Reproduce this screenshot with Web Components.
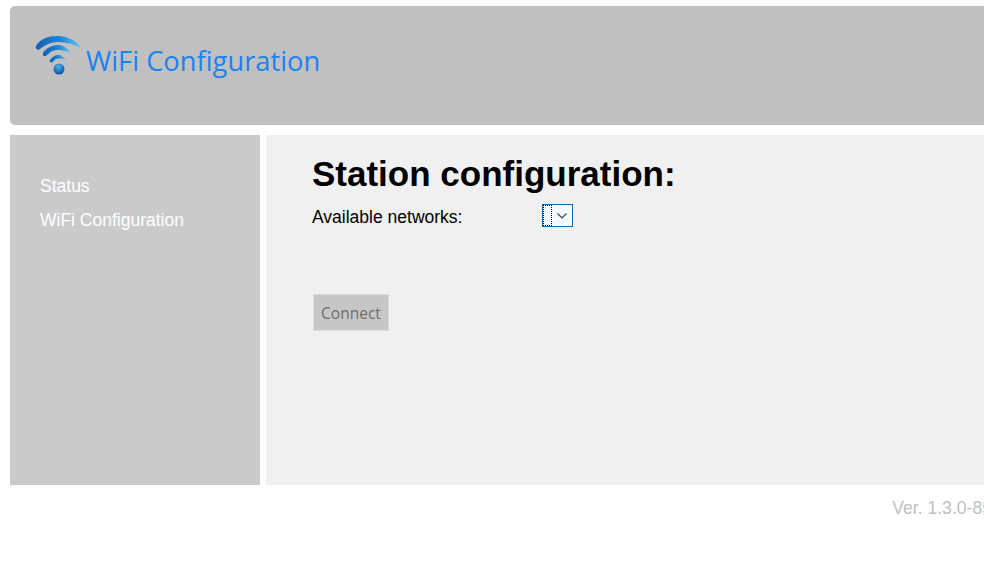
<!DOCTYPE html>
<html lang="en">
<head>
<meta charset="UTF-8">
<title>WiFi Configuration</title>
<style>
    html, body{
        margin: 0;
        height: 100%;
        overflow: hidden;
        background: #fff;
        font-family: "Liberation Sans", Arial, sans-serif;
    }
</style>
</head>
<body>
<wifi-app>
    <wifi-header slot="header">WiFi Configuration</wifi-header>
    <wifi-nav slot="nav">
        <a>Status</a>
        <a>WiFi Configuration</a>
    </wifi-nav>
    <station-form slot="main"></station-form>
    <span slot="footer">Ver. 1.3.0-85</span>
</wifi-app>

<script>
    class WifiApp extends HTMLElement {
        constructor() {
            super();
            this.attachShadow({ mode: 'open' });
            this.shadowRoot.innerHTML = `
                <style>
                    :host{
                        display: block;
                        width: 1000px;
                        padding: 6px 0 0 10px;
                    }
                    .row{
                        display: flex;
                        gap: 6px;
                        height: 350px;
                        margin-top: 10px;
                    }
                    footer{
                        display: flex;
                        justify-content: flex-end;
                        padding: 13px 18px 0 0;
                        font-size: 17.6px;
                        line-height: 20px;
                        color: #c0c0c0;
                    }
                </style>
                <slot name="header"></slot>
                <div class="row">
                    <slot name="nav"></slot>
                    <slot name="main"></slot>
                </div>
                <footer><slot name="footer"></slot></footer>
            `;
        }
    }
    customElements.define('wifi-app', WifiApp);

    class WifiHeader extends HTMLElement {
        constructor() {
            super();
            this.attachShadow({ mode: 'open' });
            this.shadowRoot.innerHTML = `
                <style>
                    :host{
                        display: flex;
                        align-items: flex-start;
                        box-sizing: border-box;
                        height: 119px;
                        padding: 30px 0 0 25px;
                        background: #c0c0c0;
                        border-radius: 5px 0 0 5px;
                    }
                    svg{
                        flex: none;
                        display: block;
                    }
                    span{
                        margin: 7px 0 0 4px;
                        font-family: "Open Sans", sans-serif;
                        font-size: 27.3px;
                        line-height: 36px;
                        color: #1a84f0;
                    }
                </style>
                <svg width="47" height="40" viewBox="0 0 47 40">
                    <defs>
                        <linearGradient id="arc" x1="0" y1="0" x2="1" y2="0">
                            <stop offset="0" stop-color="#0f5fb0"/>
                            <stop offset="0.55" stop-color="#1e86d8"/>
                            <stop offset="1" stop-color="#5cc4ee"/>
                        </linearGradient>
                        <radialGradient id="dot" cx="0.45" cy="0.3" r="0.7">
                            <stop offset="0" stop-color="#4fb0ee"/>
                            <stop offset="1" stop-color="#0a4f9c"/>
                        </radialGradient>
                    </defs>
                    <path d="M1 10 C5 3 13 0 22 0 C32 0 41 4 46 12 C39 8 31 6 23 6 C16 6 10 9 5 13 C2 15 0 12 1 10 Z" fill="url(#arc)"/>
                    <path d="M8 17 C11 12 17 9 23 9 C28 9 33 12 36 18 C32 15 28 14 23 14 C18 14 15 16 11 20 C9 21 7 19 8 17 Z" fill="url(#arc)"/>
                    <path d="M15 24 C17 21 20 19 23 19 C26 19 29 21 31 24 C28 23 26 22.500 23 22.500 C21 22.500 19 24 18 26 C16 27 14 26 15 24 Z" fill="url(#arc)"/>
                    <circle cx="24" cy="33" r="5.500" fill="url(#dot)"/>
                </svg>
                <span><slot></slot></span>
            `;
        }
    }
    customElements.define('wifi-header', WifiHeader);

    class WifiNav extends HTMLElement {
        constructor() {
            super();
            this.attachShadow({ mode: 'open' });
            this.shadowRoot.innerHTML = `
                <style>
                    :host{
                        display: flex;
                        flex-direction: column;
                        gap: 14px;
                        flex: none;
                        box-sizing: border-box;
                        width: 250px;
                        padding: 41px 0 0 30px;
                        background: #cacaca;
                        color: #fff;
                        font-size: 17.5px;
                        line-height: 20px;
                    }
                </style>
                <slot></slot>
            `;
        }
    }
    customElements.define('wifi-nav', WifiNav);

    class StationForm extends HTMLElement {
        constructor() {
            super();
            this.attachShadow({ mode: 'open' });
            this.shadowRoot.innerHTML = `
                <style>
                    :host{
                        display: block;
                        flex: 1;
                        box-sizing: border-box;
                        padding: 19px 0 0 46px;
                        background: #f0f0f0;
                        color: #000;
                    }
                    h1{
                        margin: 0;
                        font-size: 35px;
                        line-height: 40px;
                        font-weight: bold;
                    }
                    .field{
                        display: flex;
                        align-items: flex-start;
                        height: 26px;
                        margin-top: 10px;
                        font-size: 17.5px;
                        line-height: 26px;
                    }
                    label{
                        width: 230px;
                    }
                    .select{
                        display: flex;
                        box-sizing: border-box;
                        width: 31px;
                        height: 23px;
                        border: 1px solid #1268a8;
                        background: #f4f9fc;
                    }
                    .focus{
                        width: 9px;
                        border: 1px dotted #000;
                        box-sizing: border-box;
                    }
                    .arrow{
                        flex: 1;
                        display: flex;
                        align-items: center;
                        justify-content: center;
                    }
                    button{
                        display: block;
                        box-sizing: border-box;
                        width: 76px;
                        height: 37px;
                        margin: 64px 0 0 1px;
                        padding: 0;
                        border: 1px solid #dcdcdc;
                        background: #c6c6c6;
                        color: #6d6d6d;
                        font-family: "Open Sans", sans-serif;
                        font-size: 15.500px;
                    }
                </style>
                <h1>Station configuration:</h1>
                <div class="field">
                    <label>Available networks:</label>
                    <div class="select">
                        <div class="focus"></div>
                        <div class="arrow">
                            <svg width="10" height="6" viewBox="0 0 10 6"><path d="M0.500 0.500 L5 5 L9.500 0.500" fill="none" stroke="#444" stroke-width="1.200"/></svg>
                        </div>
                    </div>
                </div>
                <button disabled>Connect</button>
            `;
        }
    }
    customElements.define('station-form', StationForm);
</script>
</body>
</html>
